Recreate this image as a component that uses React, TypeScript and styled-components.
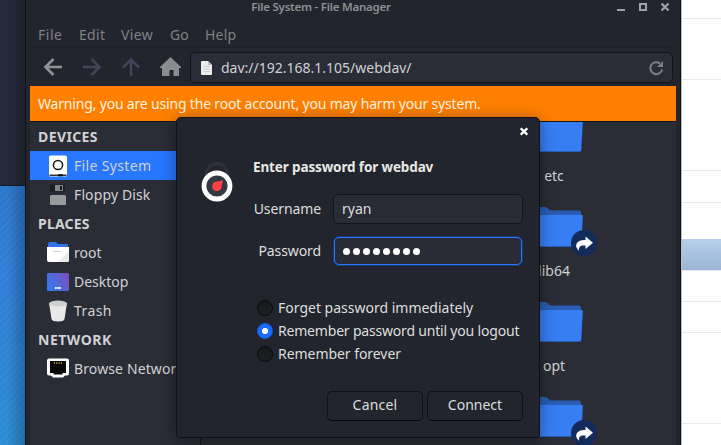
import React from 'react';
import styled, { createGlobalStyle, css } from 'styled-components';

const GlobalStyle = createGlobalStyle`
  * { box-sizing: border-box; }
  body { margin: 0; overflow: hidden; background: #fff; }
  button { font: inherit; }
`;

const Screen = styled.div`
  display: grid;
  grid-template-columns: 25px 656px 40px;
  width: 721px;
  height: 445px;
  overflow: hidden;
  position: relative;
  font-family: 'Noto Sans', sans-serif;
  font-size: 14px;
  color: #d0d2d5;
  white-space: nowrap;
`;

/* ---- surroundings ---- */
const Backdrop = styled.div`
  display: flex;
  flex-direction: column;
`;
const BackWindow = styled.div`
  height: 186px;
  background: linear-gradient(90deg, #242a3a 0, #222836 14px, #1c212b 25px);
  border-bottom: 1px solid #111820;
`;
const Wallpaper = styled.div`
  flex: 1;
  background:
    linear-gradient(90deg, transparent 8px, rgba(10, 35, 70, 0.32) 25px),
    repeating-linear-gradient(135deg, rgba(255, 255, 255, 0.035) 0 2px, transparent 2px 5px),
    linear-gradient(#2c76cb 0, #327ed8 90px, #2a8cd2 259px);
`;
const Page = styled.div`
  border-left: 1px solid #bcbcbc;
  background: #fff;
`;
const PageRow = styled.div<{ $h: number; $line?: boolean; $active?: boolean }>`
  height: ${p => p.$h}px;
  ${p => p.$line && css`border-bottom: 1px solid #e9e9eb;`}
  ${p => p.$active && css`
    background: linear-gradient(#b9cfe9, #9ab5d6);
    border-bottom: 1px solid #e3eaf5;
  `}
`;

/* ---- file manager window ---- */
const Window = styled.div`
  display: flex;
  flex-direction: column;
  padding: 0 4px;
  border: solid #101218;
  border-width: 0 1px;
  background: #23252e;
  min-height: 0;
`;
const TitleBar = styled.div`
  height: 22px;
  display: grid;
  grid-template-columns: 70px 1fr 130px;
  color: #8d9095;
`;
const WindowTitle = styled.div`
  grid-column: 2;
  text-align: center;
  padding-right: 4px;
  font-size: 11.5px;
  font-weight: 600;
  line-height: 14px;
  letter-spacing: -0.24px;
`;
const WindowButtons = styled.svg`
  justify-self: end;
  margin-right: 5px;
  display: block;
`;
const MenuBar = styled.div`
  height: 26px;
  display: flex;
  gap: 17px;
  padding-left: 8px;
  border-bottom: 1px solid #1e2028;
  line-height: 25px;
  color: #7f8186;
`;
const MenuItem = styled.span<{ $w: number; $ls?: number }>`
  width: ${p => p.$w}px;
  letter-spacing: ${p => p.$ls ?? 0.1}px;
`;
const Toolbar = styled.div`
  height: 38px;
  display: flex;
  align-items: center;
  padding: 0 3px 0 11px;
`;
const NavButton = styled.svg`
  width: 24px;
  height: 24px;
  flex: none;
  margin-right: 15px;
`;
const PathEntry = styled.div`
  flex: 1;
  height: 31px;
  margin: 1px 0 0 -7px;
  display: flex;
  align-items: center;
  padding: 0 7px 0 9px;
  background: #2a2c37;
  border: 1px solid #121419;
  border-radius: 5px;
`;
const PathText = styled.span`
  flex: 1;
  padding-left: 7px;
`;
const Warning = styled.div`
  height: 36px;
  flex: none;
  padding-left: 8px;
  background: #ff8000;
  border-bottom: 1px solid #15171d;
  color: #fff3e2;
  line-height: 35px;
  letter-spacing: -0.18px;
`;
const Body = styled.div`
  flex: 1;
  min-height: 0;
  display: grid;
  grid-template-columns: 171px 1fr;
  background: #2a2c36;
`;
const Sidebar = styled.div`
  border-right: 1px solid #14161c;
  overflow: hidden;
`;
const Heading = styled.div<{ $ls: number }>`
  height: 29px;
  line-height: 29px;
  padding-left: 8px;
  font-weight: 700;
  letter-spacing: ${p => p.$ls}px;
`;
const Place = styled.div<{ $selected?: boolean; $ls?: number }>`
  height: 29px;
  display: flex;
  align-items: center;
  gap: 4px;
  padding-left: 16px;
  letter-spacing: ${p => p.$ls ?? 0}px;
  ${p => p.$selected && css`background: #2777ff;`}
`;
const PlaceIcon = styled.svg`
  width: 24px;
  height: 24px;
  flex: none;
`;
const FolderArea = styled.div`
  min-width: 0;
  overflow: hidden;
`;
const FolderGrid = styled.div`
  display: grid;
  grid-template-columns: repeat(4, 100px);
  grid-auto-rows: 95px;
  height: 400px;
  margin-top: -11px;
  padding-left: 3px;
`;
const FolderCell = styled.div`
  display: flex;
  flex-direction: column;
  align-items: center;
`;
const FolderLabel = styled.span`
  line-height: 20px;
  margin-top: 4px;
`;

/* ---- authentication dialog ---- */
const Dialog = styled.div`
  position: absolute;
  left: 176px;
  top: 117px;
  width: 364px;
  height: 321px;
  padding: 0 16px 16px 24px;
  display: grid;
  grid-template-columns: 52px 1fr;
  grid-template-rows: 28px 1fr 32px;
  background: #23252e;
  border: 1px solid #0f1116;
  border-radius: 5px 5px 3px 3px;
  box-shadow: 0 2px 16px rgba(0, 0, 0, 0.4);
  color: #dddfdf;
`;
const DialogBar = styled.div`
  grid-column: 1 / -1;
  display: flex;
  justify-content: flex-end;
  padding-top: 9px;
  margin-right: -5px;
`;
const LockIcon = styled.svg`
  width: 32px;
  height: 44px;
  margin-top: 13px;
`;
const Form = styled.div`
  display: flex;
  flex-direction: column;
`;
const DialogTitle = styled.div`
  height: 48px;
  line-height: 43px;
  font-size: 13.5px;
  font-weight: 700;
  letter-spacing: -0.13px;
  color: #e8e9e6;
`;
const Field = styled.label`
  display: grid;
  grid-template-columns: 68px 190px;
  column-gap: 12px;
  align-items: center;
  height: 30px;
  margin-bottom: 12px;
`;
const FieldName = styled.span`
  text-align: right;
  padding-bottom: 2px;
  letter-spacing: -0.1px;
`;
const Entry = styled.div<{ $focus?: boolean }>`
  height: 30px;
  display: flex;
  align-items: center;
  padding: 0 0 2px 8px;
  border: 1px solid #121419;
  border-radius: 5px;
  background: #292b36;
  ${p => p.$focus && css`
    border-color: #2777ff;
    box-shadow: 0 0 0 1px rgba(20, 75, 180, 0.55);
    margin: 0 1px;
    height: 28px;
    padding-bottom: 0;
  `}
`;
const Dots = styled.div`
  display: flex;
  gap: 3px;
  & > i {
    width: 7px;
    height: 7px;
    border-radius: 50%;
    background: #fff;
  }
`;
const Options = styled.div`
  margin-top: 19px;
`;
const Option = styled.label<{ $ls: number }>`
  height: 23px;
  display: flex;
  align-items: center;
  gap: 5px;
  padding: 0 0 2px 4px;
  letter-spacing: ${p => p.$ls}px;
`;
const Radio = styled.span<{ $checked?: boolean }>`
  width: 16px;
  height: 16px;
  border-radius: 50%;
  border: 1px solid #090a0d;
  background: linear-gradient(#17181c, #1e2024);
  ${p => p.$checked && css`
    border-color: #0d5ae4;
    background: radial-gradient(circle, #fff 0 2.7px, #1a6dff 3.5px);
  `}
`;
const Actions = styled.div`
  grid-column: 1 / -1;
  display: flex;
  justify-content: flex-end;
  align-items: flex-end;
  gap: 4px;
`;
const Button = styled.button<{ $ls?: number }>`
  width: 96px;
  height: 30px;
  padding: 0 0 3px;
  background: #23252e;
  border: 1px solid #0f1116;
  border-bottom-color: #08090c;
  border-radius: 5px;
  color: inherit;
  letter-spacing: ${p => p.$ls ?? 0}px;
`;

const Folder = ({ link }: { link?: boolean }) => (
  <svg width="100" height="51" viewBox="0 0 100 51">
    <path d="M25 3q0-2 2-2h14q1.500 0 3 1.500l2 2h29q2 0 2 2v8H25z" fill="#2a5db5" />
    <path d="M24 9h55q0 2-.2 5l-1.400 25q-.1 2-1.400 2H27q-1.500 0-1.600-2z" fill="#275cb3" />
    <path d="M24 9h54q.6 0 .5 3l-1.400 26.500q0 1.500-1 1.500H26.500z" fill="#387ef3" />
    {link && (
      <g>
        <circle cx="80" cy="37" r="13" fill="#132b5b" />
        <path d="M81.500 30.500l7.500 6.300-7.500 6.300v-3.600c-5-.4-7 .8-6.400 5.200-5.600-4.400-3-11 6.400-10.600z" fill="#fff" />
      </g>
    )}
  </svg>
);

const rows = [
  { name: 'etc', link: false },
  { name: 'lib64', link: true },
  { name: 'opt', link: false },
  { name: '', link: true },
];

export default function App() {
  return (
    <>
      <GlobalStyle />
      <Screen>
        <Backdrop>
          <BackWindow />
          <Wallpaper />
        </Backdrop>

        <Window>
          <TitleBar>
            <WindowTitle>File System - File Manager</WindowTitle>
            <WindowButtons width="54" height="14" viewBox="0 0 54 14" fill="none" stroke="#a0a2a6">
              <path d="M0 10h8" strokeWidth="2" />
              <path d="M23 4h6v6h-6z" strokeWidth="2" />
              <path d="M44.500 3.500l7 7M51.500 3.500l-7 7" strokeWidth="2.200" />
            </WindowButtons>
          </TitleBar>
          <MenuBar>
            <MenuItem $w={24} $ls={0.5}>File</MenuItem>
            <MenuItem $w={25} $ls={0.3}>Edit</MenuItem>
            <MenuItem $w={32} $ls={0.4}>View</MenuItem>
            <MenuItem $w={18}>Go</MenuItem>
            <MenuItem $w={30} $ls={0.2}>Help</MenuItem>
          </MenuBar>
          <Toolbar>
            <NavButton viewBox="0 0 24 24" fill="none" stroke="#929397" strokeWidth="2.600">
              <path d="M21 12H5M12.500 4L4.500 12l8 8" />
            </NavButton>
            <NavButton viewBox="0 0 24 24" fill="none" stroke="#414558" strokeWidth="2.600">
              <path d="M3 12h16M11.500 4l8 8-8 8" />
            </NavButton>
            <NavButton viewBox="0 0 24 24" fill="none" stroke="#414558" strokeWidth="2.600">
              <path d="M12 21V5M4 12.500l8-8 8 8" />
            </NavButton>
            <NavButton viewBox="0 0 24 24" fill="#8b8c90">
              <path d="M12.500 2L23 12v1h-2v8h-5.500v-6h-4v6H4v-8H2v-1z" />
            </NavButton>
            <PathEntry>
              <svg width="14" height="16" viewBox="0 0 14 16">
                <path d="M1 2q0-1 1-1h6l4 4v9q0 1-1 1H2q-1 0-1-1z" fill="#ececec" />
                <path d="M8 1l4 4H8z" fill="#bdbdbd" />
                <path d="M4 6.500h5.500M4 9h5.500M4 11.500h5.500" stroke="#cfcfcf" />
              </svg>
              <PathText>dav://192.168.1.105/webdav/</PathText>
              <svg width="18" height="18" viewBox="0 0 18 18" fill="none">
                <path d="M15.200 10.500A6 6 0 1 1 13 4.400" stroke="#7e8086" strokeWidth="2" />
                <path d="M16 2v6h-6z" fill="#7e8086" />
              </svg>
            </PathEntry>
          </Toolbar>
          <Warning>Warning, you are using the root account, you may harm your system.</Warning>
          <Body>
            <Sidebar>
              <Heading $ls={0.4}>DEVICES</Heading>
              <Place $selected $ls={0.35}>
                <PlaceIcon viewBox="0 0 24 24">
                  <rect x="3" y="1.500" width="18" height="21" rx="1.500" fill="#fff" />
                  <circle cx="12" cy="11" r="4.600" fill="none" stroke="#16191d" strokeWidth="1.500" />
                  <path d="M3.500 20.500h17v1.500h-17z" fill="#333" />
                  <path d="M12 20.300h5v2h-5z" fill="#0b0b0b" />
                </PlaceIcon>
                File System
              </Place>
              <Place $ls={0.12}>
                <PlaceIcon viewBox="0 0 24 24">
                  <path d="M4 1.500h15v7H5l-1-1z" fill="#1b1d23" />
                  <path d="M9 2h8v6H9z" fill="#85868a" />
                  <path d="M14 3h2v4h-2z" fill="#17191e" />
                  <path d="M5 12h14l1 1v8q0 1-1 1H5q-1 0-1-1v-8z" fill="#999a9e" />
                </PlaceIcon>
                Floppy Disk
              </Place>
              <Heading $ls={0.2}>PLACES</Heading>
              <Place>
                <PlaceIcon viewBox="0 0 24 24">
                  <path d="M2 3q0-2 2-2h6l2 2h9q1 0 1 1v4H2z" fill="#2f73e6" />
                  <path d="M1 6h22v13q0 2-2 2H3q-2 0-2-2z" fill="#fff" />
                  <path d="M23 10v9q0 2-2 2h-9z" fill="#ebebeb" />
                  <path d="M7 10.500h9" stroke="#d5d5d5" />
                </PlaceIcon>
                root
              </Place>
              <Place>
                <PlaceIcon viewBox="0 0 24 24">
                  <defs>
                    <linearGradient id="desk" x1="0" y1="0.700" x2="1" y2="0.200">
                      <stop offset="0" stopColor="#337af0" />
                      <stop offset="1" stopColor="#7a4fba" />
                    </linearGradient>
                  </defs>
                  <rect x="1" y="3" width="22" height="18" rx="1.200" fill="url(#desk)" />
                  <path d="M9 18h6" stroke="#fff" strokeWidth="2" strokeDasharray="1.600 .5" />
                </PlaceIcon>
                Desktop
              </Place>
              <Place $ls={0.4}>
                <PlaceIcon viewBox="0 0 24 24">
                  <path d="M3 4l2.500 16q.5 2.500 6.500 2.500t6.500-2.500L21 4z" fill="#e8e8e8" />
                  <ellipse cx="12" cy="4.500" rx="9" ry="3" fill="#cfcfcf" />
                </PlaceIcon>
                Trash
              </Place>
              <Heading $ls={0.5}>NETWORK</Heading>
              <Place $ls={0.12}>
                <PlaceIcon viewBox="0 0 24 24">
                  <path d="M3 1.500h18q2 0 2 2v13q0 2-2 2h-2l-2 2H7l-2-2H3q-2 0-2-2v-13q0-2 2-2z" fill="#fff" />
                  <path d="M4 4h16v12h-3.500v1.500h-9V16H4z" fill="#070707" />
                  <path d="M8 6h8" stroke="#b59335" strokeWidth="2" strokeDasharray="1 1.300" />
                </PlaceIcon>
                Browse Network
              </Place>
            </Sidebar>
            <FolderArea>
              <FolderGrid>
                {rows.map((row, r) =>
                  [0, 1, 2, 3].map(col => (
                    <FolderCell key={`${r}-${col}`}>
                      <Folder link={col === 3 && row.link} />
                      {col === 3 && <FolderLabel>{row.name}</FolderLabel>}
                    </FolderCell>
                  )),
                )}
              </FolderGrid>
            </FolderArea>
          </Body>
        </Window>

        <Page>
          <PageRow $h={19} $line />
          <PageRow $h={61} $line />
          <PageRow $h={91} $line />
          <PageRow $h={32} $line />
          <PageRow $h={36} />
          <PageRow $h={32} $active />
          <PageRow $h={31} $line />
          <PageRow $h={31} $line />
          <PageRow $h={91} $line />
        </Page>

        <Dialog role="dialog">
          <DialogBar>
            <svg width="8" height="9" viewBox="0 0 8 9" stroke="#fff" strokeWidth="2.300">
              <path d="M.7 1.200l6.600 6.600M7.300 1.200L.7 7.800" />
            </svg>
          </DialogBar>
          <LockIcon viewBox="0 0 32 44">
            <path d="M5.500 20v-5a10.500 10.500 0 0 1 21 0v5" fill="none" stroke="#2d303b" strokeWidth="3.500" />
            <circle cx="16" cy="27" r="13" fill="#343843" stroke="#fff" strokeWidth="4.800" />
            <path d="M22 21q-.4 3.500-1.300 5.500a4.800 4.800 0 1 1-4.500-4q3.300-.2 5.800-1.500z" fill="#ff4141" />
          </LockIcon>
          <Form>
            <DialogTitle>Enter password for webdav</DialogTitle>
            <Field>
              <FieldName>Username</FieldName>
              <Entry>ryan</Entry>
            </Field>
            <Field>
              <FieldName>Password</FieldName>
              <Entry $focus>
                <Dots>{Array.from({ length: 8 }, (_, i) => <i key={i} />)}</Dots>
              </Entry>
            </Field>
            <Options>
              <Option $ls={0}><Radio />Forget password immediately</Option>
              <Option $ls={-0.19}><Radio $checked />Remember password until you logout</Option>
              <Option $ls={-0.05}><Radio />Remember forever</Option>
            </Options>
          </Form>
          <Actions>
            <Button $ls={0.2}>Cancel</Button>
            <Button>Connect</Button>
          </Actions>
        </Dialog>
      </Screen>
    </>
  );
}
